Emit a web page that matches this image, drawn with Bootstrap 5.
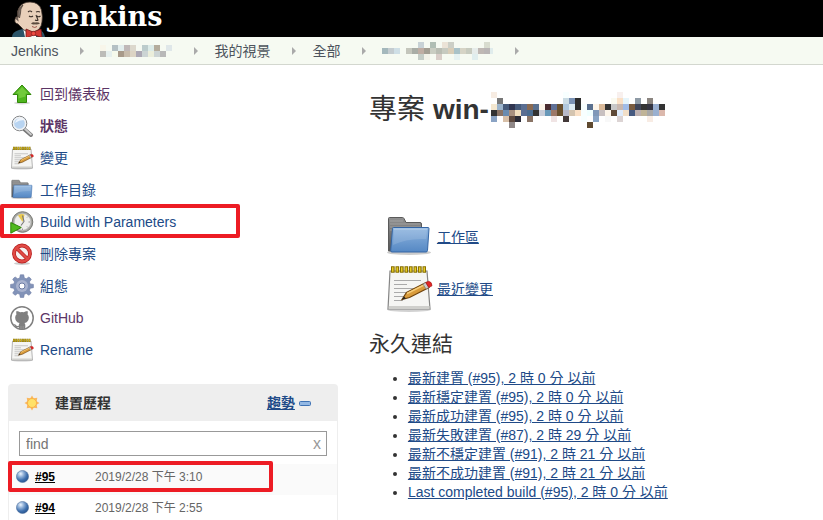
<!DOCTYPE html>
<html lang="zh-Hant">
<head>
<meta charset="utf-8">
<meta name="viewport" content="width=device-width, initial-scale=1">
<title>Jenkins</title>
<link href="https://cdn.jsdelivr.net/npm/bootstrap@5.3.0/dist/css/bootstrap.min.css" rel="stylesheet">
<style>
  body { font: 14px/20px "Liberation Sans", "Noto Sans CJK TC", sans-serif; color: #333; background: #fff; }
  a { color: #204a87; }
  button { font: inherit; }
  .topbar { background: #000; height: 37px; padding-left: 12px; }
  .brand { color: #fff; font: bold 27px/34px "DejaVu Serif", serif; gap: 4px; }
  .brand svg { margin-top: 1px; }
  .crumbs { background: #f6faf2; border-bottom: 1px solid #d3d7cf; height: 28px; padding-left: 11px; }
  .crumbs li { display: flex; align-items: center; }
  .crumbs li::after { content: ""; margin: 0 16px 0 22px; border: 4px solid transparent; border-left-color: #aaa; border-right: 0; }
  .crumbs a { color: #4d545d; }
  .side { padding: 13px 5px 0 8px; }
  .tasks { margin-bottom: 18px; }
  .task { height: 32px; gap: 6px; padding-left: 2px; }
  .task svg { width: 24px; height: 24px; }
  .seen { color: #5c3566; }
  .marked { position: relative; }
  .marked::after { content: ""; position: absolute; border: 4px solid #ed1c24; border-radius: 2px; pointer-events: none; }
  .task.marked::after { inset: -2px 98px 0 -8px; }
  .build.marked::after { inset: -3px 64px 3px -1px; }
  .history { border: 1px solid #eee; border-bottom: 0; border-radius: 4px 4px 0 0; }
  .history-head { background: #eee; height: 36px; padding: 0 26px 0 15px; }
  .history-head h2 { font-size: 14px; line-height: 20px; margin-left: 15px; }
  .search { border: 1px solid #999; margin: 10px 10px 8px; height: 25px; padding: 0 5px 0 6px; }
  .search input { border: 0; outline: 0; padding: 0; background: none; color: #333; }
  .search input::placeholder { color: #757575; opacity: 1; }
  .search button { color: #999; }
  .build { font-size: 12px; height: 31px; padding: 0 0 6px 7px; }
  .build:nth-child(odd) { background: #fafafa; }
  .build:last-child { height: 25px; padding-bottom: 0; }
  .build a { color: #000; width: 60px; margin-left: 6px; }
  .build time { color: #666; }
  .content { padding: 25px 16px 0 26px; }
  .content h1 { font-size: 28px; line-height: 40px; margin-bottom: 81px; }
  .content h1 svg { margin-left: 2px; }
  .content h2 { font-size: 21px; line-height: 30px; margin: 14px 0 10px; }
  .jump { height: 52px; padding-left: 16px; gap: 4px; }
  .jump svg { width: 48px; height: 48px; }
  .links { line-height: 19px; padding-left: 39px; }
</style>
</head>
<body>
<svg width="0" height="0" class="position-absolute" aria-hidden="true">
  <symbol id="notepad" viewBox="0 0 48 48">
    <ellipse cx="24" cy="44.500" rx="22" ry="2.500" fill="#000" opacity=".18"/>
    <path d="M5 6h37l3 38H3z" fill="#f5f5f3" stroke="#858585" stroke-width="1.200"/>
    <path d="M4 41h40.500v3H3.500z" fill="#cfcfcc"/>
    <path d="M9 15.500h27M9 19.500h13M9 23.500h26M9 27.500h21M9 31.500h18M9 35.500h9" stroke="#aaa" stroke-width="1.200"/>
    <path d="M6 4.500h35" stroke="#887000" stroke-width="6.500" stroke-dasharray="3.700 .8"/>
    <path d="M7 4.500h34" stroke="#e8cc26" stroke-width="4.500" stroke-dasharray="1.500 3"/>
    <path d="M17 34.500l4.500-7L41 17.500l3 5-19.500 10z" fill="#d99b3b" stroke="#70430b" stroke-width="1.200"/>
    <path d="M22 28.500l19-9.500" stroke="#f6cd79" stroke-width="1.500"/>
    <path d="M17 34.500l2-3 2 2z" fill="#222"/>
    <path d="M38 19l2.800-1.500 3 5L41 24z" fill="#ccc" stroke="#777" stroke-width=".6"/>
    <path d="M40.800 17.500l2.700-1.200q3.500.5 3.500 4.500l-3.200 1.700z" fill="#e22626" stroke="#a91818" stroke-width=".7"/>
  </symbol>
  <linearGradient id="blueFold" x2="0" y2="1"><stop stop-color="#8fb5df"/><stop offset="1" stop-color="#5588c4"/></linearGradient>
  <linearGradient id="grayFold" x2="0" y2="1"><stop stop-color="#919191"/><stop offset="1" stop-color="#555"/></linearGradient>
  <symbol id="folder" viewBox="0 0 48 48">
    <ellipse cx="24" cy="39.500" rx="22" ry="2.500" fill="#000" opacity=".2"/>
    <path d="M3.500 38V5.500q0-1 1-1h13q1 0 1.500 1l2 4h14q1.500 0 1.500 1.500v27z" fill="url(#grayFold)" stroke="#5a5a5a"/>
    <path d="M5 8h13M5 11h30M5 14h31M5 17h10" stroke="#b1b1b1" stroke-width=".6"/>
    <path d="M8.500 14.500h34.500q1 0 1 1l-1.500 22q-.2 1.500-1.500 1.500H7q-1.500 0-1.300-1.500l1.800-22q0-1 1-1z" fill="url(#blueFold)" stroke="#3465a4"/>
    <path d="M9 16h33l-.8 10Q22 25 8 32z" fill="#fff" opacity=".13"/>
    <path d="M8.800 16h33.500" stroke="#b9d2ed"/>
  </symbol>
  <radialGradient id="orbFill" cx=".35" cy=".28" r=".75"><stop stop-color="#eef6ff"/><stop offset=".35" stop-color="#8daed6"/><stop offset=".7" stop-color="#3f70ae"/><stop offset="1" stop-color="#28558f"/></radialGradient>
  <symbol id="orb" viewBox="0 0 12 12"><circle cx="6" cy="6" r="5.600" fill="url(#orbFill)" stroke="#486b98" stroke-width=".5"/></symbol>
</svg>

<header>
  <div class="topbar overflow-hidden">
    <a class="brand d-flex text-decoration-none" href="#">
      <svg width="33" height="36" viewBox="0 0 33 36" aria-hidden="true">
        <path d="M0 36q0-5 7-7l7-2 12 1q6 2 7 8z" fill="#2b5468"/>
        <path d="M11 27l7 8 6-8v9H13z" fill="#fff"/>
        <path d="M6 23q-4-1-3-4.500Q3.500 15 5.500 16q-1-6 2-10Q11 1 18 1q9 0 11.500 8 1.500 7 .5 12-1 8-8 10-9 1-13-5z" fill="#e9d0ba" stroke="#3a2d26" stroke-width=".8"/>
        <path d="M6 16q-1-8 5-12-3 4-2.500 8L7.500 17q-2-3-3 1 .5 1 2 2" fill="#776b63" stroke="#4d4039" stroke-width=".8"/>
        <path d="M16 11q2-2 4 0M24 11q2-1 4 0M17 15q2 1.500 4 0M25 15q1.500 1.500 3.500 0M24 14l2 5q-1 1-3 0" fill="none" stroke="#3c3029" stroke-width="1.100"/>
        <path d="M19 22.500q2-2 4-1 3-1 5 1-3 1.500-5 .7-2 .8-4-.7z" fill="#5c4b3e"/>
        <path d="M20 25.500q3 2 5 0" stroke="#a15a4c" fill="none"/>
        <path d="M14 28l7 3 8-3 1 8.500-8-2.500-8 3z" fill="#d33833" stroke="#731a18" stroke-width=".8"/>
        <circle cx="21.500" cy="32.500" r="2.200" fill="#ef4a42" stroke="#731a18" stroke-width=".6"/>
      </svg>
      <span>Jenkins</span>
    </a>
  </div>
  <nav aria-label="breadcrumb">
    <ol class="crumbs list-unstyled d-flex mb-0">
      <li><a class="text-decoration-none" href="#">Jenkins</a></li>
      <li><a class="d-flex" href="#" aria-label="Job"><svg data-mosaic="job" width="72" height="12" shape-rendering="crispEdges"></svg></a></li>
      <li><a class="text-decoration-none" href="#">我的視景</a></li>
      <li><a class="text-decoration-none" href="#">全部</a></li>
      <li><a class="d-flex" href="#" aria-label="Project"><svg data-mosaic="branch" width="111" height="18" shape-rendering="crispEdges"></svg></a></li>
    </ol>
  </nav>
</header>

<div class="row g-0">
  <aside class="col-5 side">
    <nav class="tasks">
      <a class="task seen d-flex align-items-center text-decoration-none" href="#">
        <svg viewBox="0 0 24 24"><ellipse cx="12" cy="21" rx="8" ry="1.500" opacity=".15"/><path d="M12 3l9 9.500H16.500v8h-9v-8H3z" fill="#4fb51e" stroke="#318808"/><path d="M12 5l6.300 6.500H15.500v3l-7 2v-5H5.700z" fill="#8fdb54" opacity=".55"/></svg>回到儀表板</a>
      <a class="task seen fw-bold d-flex align-items-center text-decoration-none" href="#">
        <svg viewBox="0 0 24 24"><path d="M14 15l7 6" stroke="#777" stroke-width="4" stroke-linecap="round"/><path d="M14.500 14.500l6.500 6" stroke="#ccc" stroke-width="1.800" stroke-linecap="round"/><circle cx="9.500" cy="9.500" r="7.300" fill="#cfe2f7" stroke="#858585"/><circle cx="9.500" cy="9.500" r="6" fill="#b8d4f1" stroke="#f2f2f2" stroke-width="1.300"/><path d="M5 9q1-4 5-5 3 0 4 2-5 0-9 3z" fill="#fff" opacity=".75"/></svg>狀態</a>
      <a class="task d-flex align-items-center text-decoration-none" href="#"><svg><use href="#notepad"/></svg>變更</a>
      <a class="task d-flex align-items-center text-decoration-none" href="#"><svg><use href="#folder"/></svg>工作目錄</a>
      <a class="task marked d-flex align-items-center text-decoration-none" href="#">
        <svg viewBox="0 0 24 24"><circle cx="12.500" cy="12" r="10.300" fill="#a5a6a1" stroke="#777873"/><circle cx="12.500" cy="12" r="8.300" fill="#eeeeec" stroke="#bbb" stroke-width=".7"/><path d="M12.500 12L8 5.500q4-2.500 6.500-.5z" fill="#e8c84e"/><path d="M12.500 5.500l1.500 6-3 4" fill="none" stroke="#777" stroke-width="1.100"/><path d="M20 12h-1.500M12.500 20v-1.500M18 6.500l-1 1M18 17.500l-1-1" stroke="#999"/><path d="M.8 12.500l10.500 5L.8 23.200z" fill="#50b91e" stroke="#2e8408"/></svg>Build with Parameters</a>
      <a class="task d-flex align-items-center text-decoration-none" href="#">
        <svg viewBox="0 0 24 24"><ellipse cx="12" cy="21.500" rx="8" ry="1.500" opacity=".2"/><circle cx="12" cy="11.500" r="8" fill="#f5f1f0" stroke="#b51d1d" stroke-width="3.800"/><path d="M6.500 6l11 11" stroke="#b51d1d" stroke-width="3.600"/><circle cx="12" cy="11.500" r="8" fill="none" stroke="#e04a45" stroke-width="2.400"/><path d="M6.500 6l11 11" stroke="#e04a45" stroke-width="2.400"/></svg>刪除專案</a>
      <a class="task d-flex align-items-center text-decoration-none" href="#">
        <svg viewBox="0 0 24 24"><path d="M10.300.8h3.400l.6 3.200 2 .8 2.700-1.900L21.300 5.300l-1.900 2.600.8 2 3.200.5v3.300l-3.200.6-.8 2 1.900 2.700-2.400 2.300-2.600-1.800-2 .8-.6 3.100h-3.400l-.6-3.100-2-.8-2.700 1.800L2.700 19l1.900-2.700-.9-2-3.100-.6v-3.300l3.100-.5.9-2-1.900-2.600L5 2.900l2.700 1.900 2-.8z" fill="#8293b8" stroke="#6b7ba4" stroke-width=".6"/><circle cx="12" cy="12" r="6" fill="#a9b3cf"/><circle cx="12" cy="12" r="3" fill="#fff" stroke="#6b7ba4"/></svg>組態</a>
      <a class="task seen d-flex align-items-center text-decoration-none" href="#">
        <svg viewBox="0 0 24 24"><circle cx="12" cy="12" r="11.200" fill="#fff" stroke="#808080" stroke-width="1.500"/><path d="M6.500 5q2.500.3 3.700 1.200Q12 5.700 13.800 6.200 15 5.300 17.500 5q.6 2 0 3.300 1.500 1.700 1.300 3.800-.3 4.200-4.300 5 .8.800.8 2v4.100Q12 24.200 8.700 23.200v-2.300q-3 .7-3.700-1-.4-1-1.500-1.800 1.500-.4 2.500 1.200 1 1.300 2.700.5.1-1.700.8-2.700-4-.8-4.300-5Q5 10 6.500 8.300 5.900 7 6.500 5z" fill="#808080"/><path d="M11 23v-3M13.200 23v-3" stroke="#aaa" stroke-width=".5"/></svg>GitHub</a>
      <a class="task d-flex align-items-center text-decoration-none" href="#"><svg><use href="#notepad"/></svg>Rename</a>
    </nav>

    <section class="history">
      <div class="history-head d-flex align-items-center">
        <svg width="16" height="16" viewBox="0 0 16 16"><path d="M8 .5l1.700 2.800L13.300 2.700l-.6 3.600L15.500 8l-2.800 1.700.6 3.600-3.600-.6L8 15.500l-1.700-2.800-3.600.6.6-3.600L.5 8l2.800-1.700-.6-3.600 3.600.6z" fill="#f9b860"/><circle cx="8" cy="8" r="4.500" fill="#ffe168" stroke="#f7a941" stroke-width=".8"/></svg>
        <h2 class="fw-bold mb-0 me-auto">建置歷程</h2>
        <a class="fw-bold" href="#">趨勢</a>
        <button class="btn p-0 border-0 d-flex ms-1" type="button" aria-label="Collapse"><svg width="12" height="5"><rect x=".5" y=".5" width="11" height="4" rx="1" fill="#93b8e4" stroke="#3f72b4"/></svg></button>
      </div>
      <div class="search d-flex align-items-center">
        <input class="flex-grow-1" type="text" placeholder="find" aria-label="find">
        <button class="btn p-0 border-0" type="button" aria-label="Clear">x</button>
      </div>
      <div>
        <div class="build marked d-flex align-items-center"><svg width="13" height="13"><use href="#orb"/></svg><a class="fw-bold" href="#">#95</a><time>2019/2/28 下午 3:10</time></div>
        <div class="build d-flex align-items-center"><svg width="13" height="13"><use href="#orb"/></svg><a class="fw-bold" href="#">#94</a><time>2019/2/28 下午 2:55</time></div>
      </div>
    </section>
  </aside>

  <main class="col-7 content">
    <h1 class="d-flex align-items-center fw-bold"><span class="fw-normal me-2">專案</span>win-<svg data-mosaic="title" width="174" height="36" shape-rendering="crispEdges"></svg></h1>
    <div class="jump d-flex align-items-center"><svg><use href="#folder"/></svg><a href="#">工作區</a></div>
    <div class="jump d-flex align-items-center"><svg><use href="#notepad"/></svg><a href="#">最近變更</a></div>
    <h2 class="fw-normal">永久連結</h2>
    <ul class="links mb-0">
      <li><a href="#">最新建置 (#95), 2 時 0 分 以前</a></li>
      <li><a href="#">最新穩定建置 (#95), 2 時 0 分 以前</a></li>
      <li><a href="#">最新成功建置 (#95), 2 時 0 分 以前</a></li>
      <li><a href="#">最新失敗建置 (#87), 2 時 29 分 以前</a></li>
      <li><a href="#">最新不穩定建置 (#91), 2 時 21 分 以前</a></li>
      <li><a href="#">最新不成功建置 (#91), 2 時 21 分 以前</a></li>
      <li><a href="#">Last completed build (#95), 2 時 0 分 以前</a></li>
    </ul>
  </main>
</div>

<script src="https://cdn.jsdelivr.net/npm/bootstrap@5.3.0/dist/js/bootstrap.bundle.min.js"></script>
<script>
  // Redacted names: rows of 6px cells, "-" leaves a cell empty.
  const mosaics = {
    job: [
      'f8f6ea - b4c0c4 e3eeee c0b8b8 dcd8cc - bccccc dcebe8 b4ac9c - dfe7e9',
      'bcbcb8 e6f0ee f6faec a89a8a c8bcac dcd4c4 aca8b4 ccd4d4 ebeedb ccd4d4 b8b8b8 -'
    ],
    branch: [
      '- - - - - - c8d2d6 - b0beb4 - ebe3d6 cccfc6 - - - - - d8dccf',
      'a4b8bc c4ccd0 cfdfe6 - c4c6bc a9ada6 bfada3 a39e93 c9cdc2 b9bdb3 c6cac0 d8cdb8 a9c2c8 d6d4c6 c7cbbf e6ecea bfb8b4 b9b5b5 e0ecec',
      '- - - - - - c4ccc6 f2f1e8 - d8cdc8 - - e6f2f2 - - e0eeee'
    ],
    title: [
      'f7ece2 - - - - - - - - - - - f8ffff - - - - - - - - f8f0ee',
      '- 777777 - - - - - - - - - - cbdce4 7b93b5 2c2c2c - - - - - fafaf0 fae0c6 e6f5fb - 8f9ba6 - 8b8580',
      'f4e7cf 9cb4cc 465a7a 303550 465a7a 5a6e92 8a6a52 5a708f fdf5ea 4a2c30 5f7096 68502f b0c8dd dcecf4 2c2c2c f8ffff 5a708f fdf5ea d9b999 333333 c8c8c8 c8b8b0 a0bce8 7a5c3f 3f4558 333333 333340 98aed0 333333',
      '333333 8a7466 6a8cb0 a89080 f2dfc0 5a6e92 4a6c90 333333 c8ccd8 6898b8 9c7868 68502f b8b8c8 d4c4b0 fae0c6 f8ffff f0ffff 7f98b8 c8c0c0 fdf5ea 5f4a38 e0ecfc f2dfc8 465a80 bdb0b0 c0b498 a8a8a8 9ab0d0 dbb8ac',
      '8aa3c4 - d8c0a8 5f4a40 2c2c38 - 8a7466 - - - f0e4e4 - 433838 - - f8ffff - 88a4c4 - f8f8f8 - dcd4d4 - - - - f8ece4',
      '- - - 908888 - - - - - - - - - - - - 5f4a30'
    ]
  };
  document.querySelectorAll('[data-mosaic]').forEach(svg => {
    svg.innerHTML = mosaics[svg.dataset.mosaic].map((row, y) => row.split(' ').map((c, x) =>
      c === '-' ? '' : `<rect x="${x * 6}" y="${y * 6}" width="6" height="6" fill="#${c}"/>`).join('')).join('');
  });
</script>
</body>
</html>
